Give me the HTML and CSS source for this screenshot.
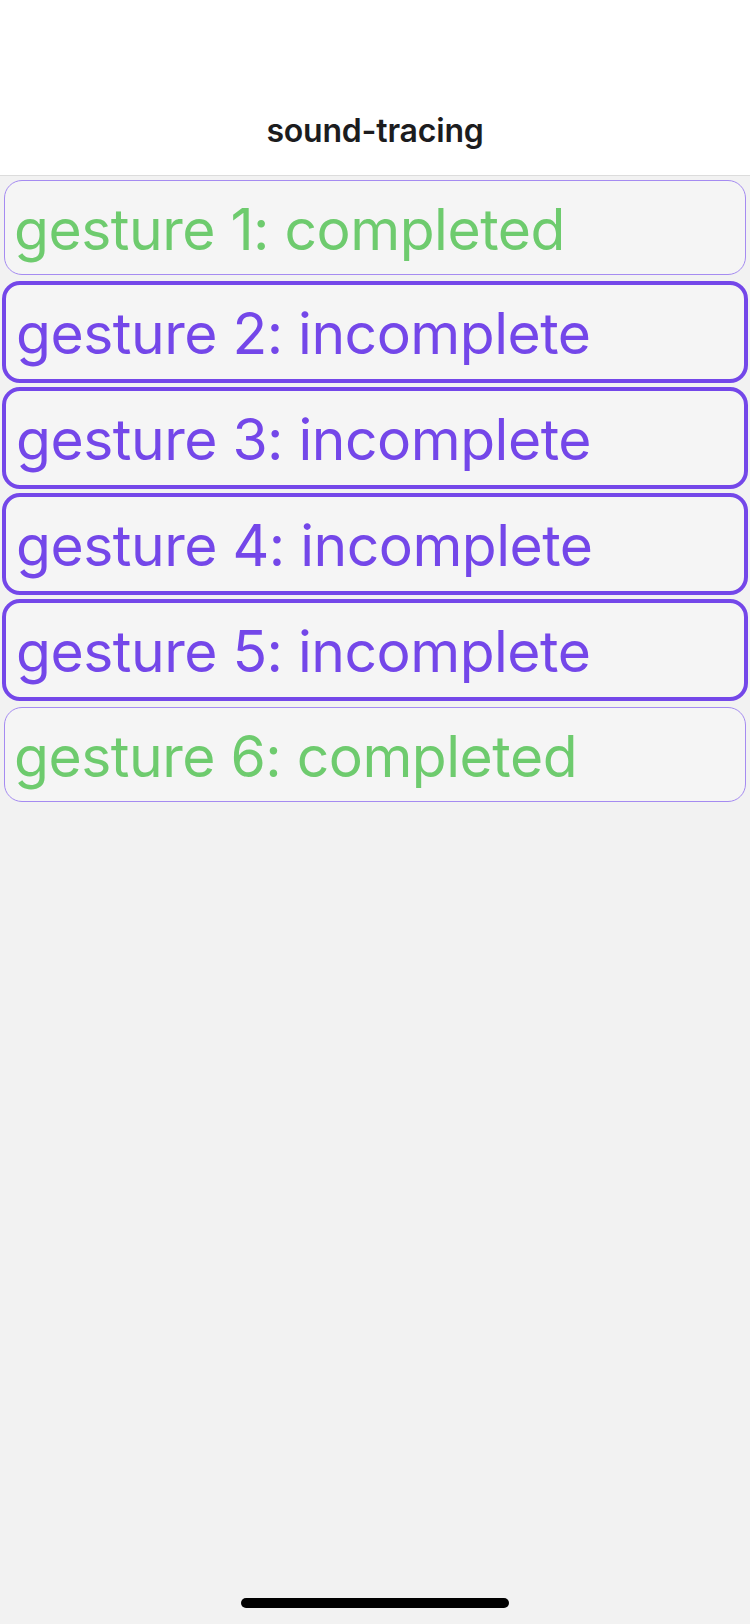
FILE: index.html
```html
<!DOCTYPE html>
<html>
<head>
<meta charset="utf-8">
<link rel="stylesheet" href="styles.css">
</head>
<body>
<div class="screen">
  <header class="nav"><span class="nav-title">sound-tracing</span></header>
  <main class="list">
    <div class="item done">gesture 1: completed</div>
    <div class="item todo">gesture 2: incomplete</div>
    <div class="item todo">gesture 3: incomplete</div>
    <div class="item todo">gesture 4: incomplete</div>
    <div class="item todo">gesture 5: incomplete</div>
    <div class="item done">gesture 6: completed</div>
  </main>
  <div class="home-indicator"></div>
</div>
</body>
</html>
```
FILE: styles.css
```css
html, body {
  margin: 0;
  padding: 0;
}
body {
  background: #f2f2f2;
  font-family: Inter, "Noto Sans", sans-serif;
}
.screen {
  position: relative;
  width: 750px;
  height: 1624px;
  overflow: hidden;
}
.nav {
  height: 176px;
  background: #ffffff;
  border-bottom: 1px solid #dcdcdc;
  box-sizing: border-box;
  display: flex;
  align-items: flex-end;
  justify-content: center;
  padding-bottom: 25px;
}
.nav-title {
  font-size: 32px;
  font-weight: 600;
  color: #1c1c1e;
  letter-spacing: -0.2px;
}
.list {
  display: flex;
  flex-direction: column;
}
.item {
  box-sizing: border-box;
  background: #f5f5f5;
  border-radius: 18px;
  display: flex;
  align-items: center;
  font-size: 57px;
  letter-spacing: -0.5px;
  white-space: nowrap;
  padding-top: 3px;
}
.done {
  height: 95px;
  margin: 4px 4px 4px;
  border: 1px solid #a58bf1;
  color: #6ecb6e;
  padding-left: 9px;
}
.todo {
  height: 102px;
  margin: 2px;
  border: 4px solid #7447e9;
  color: #7447e9;
  padding-left: 10px;
}
.home-indicator {
  position: absolute;
  left: 241px;
  top: 1598px;
  width: 268px;
  height: 10px;
  border-radius: 5px;
  background: #000;
}
```
